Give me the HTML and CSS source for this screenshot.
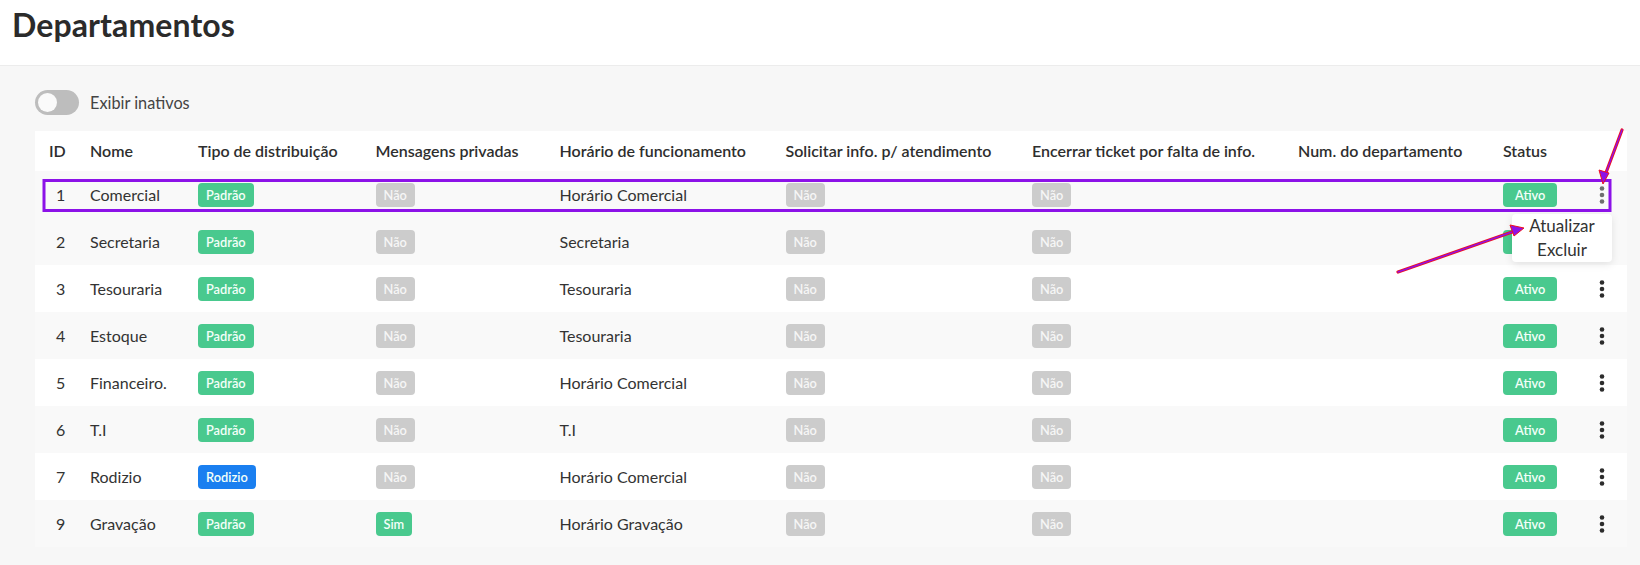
FILE: index.html
```html
<!DOCTYPE html>
<html lang="pt-BR">
<head>
<meta charset="utf-8">
<title>Departamentos</title>
<link rel="stylesheet" href="styles.css">
</head>
<body>
<header class="page-header">
  <h1 class="page-title">Departamentos</h1>
</header>
<main class="content">
  <div class="toggle-row">
    <span class="switch"><span class="knob"></span></span>
    <span class="toggle-label">Exibir inativos</span>
  </div>
  <div class="table-wrap">
    <table class="dept-table">
      <colgroup>
        <col class="c-id"><col class="c-nome"><col class="c-tipo"><col class="c-msg"><col class="c-hor"><col class="c-sol"><col class="c-enc"><col class="c-num"><col class="c-status"><col class="c-act">
      </colgroup>
      <thead>
        <tr>
          <th>ID</th><th>Nome</th><th>Tipo de distribuição</th><th>Mensagens privadas</th><th>Horário de funcionamento</th><th>Solicitar info. p/ atendimento</th><th>Encerrar ticket por falta de info.</th><th>Num. do departamento</th><th>Status</th><th></th>
        </tr>
      </thead>
      <tbody>
        <tr class="hover">
          <td class="id">1</td><td>Comercial</td><td><span class="badge green">Padrão</span></td><td><span class="badge grey">Não</span></td><td>Horário Comercial</td><td><span class="badge grey">Não</span></td><td><span class="badge grey">Não</span></td><td></td><td><span class="badge green wide">Ativo</span></td>
          <td class="act"><svg class="dots dim" width="6" height="20" viewBox="0 0 6 20"><circle cx="3" cy="3.5" r="2.3"/><circle cx="3" cy="10" r="2.3"/><circle cx="3" cy="16.5" r="2.3"/></svg></td>
        </tr>
        <tr>
          <td class="id">2</td><td>Secretaria</td><td><span class="badge green">Padrão</span></td><td><span class="badge grey">Não</span></td><td>Secretaria</td><td><span class="badge grey">Não</span></td><td><span class="badge grey">Não</span></td><td></td><td><span class="badge green wide">Ativo</span></td>
          <td class="act"><svg class="dots" width="6" height="20" viewBox="0 0 6 20"><circle cx="3" cy="3.5" r="2.3"/><circle cx="3" cy="10" r="2.3"/><circle cx="3" cy="16.5" r="2.3"/></svg></td>
        </tr>
        <tr>
          <td class="id">3</td><td>Tesouraria</td><td><span class="badge green">Padrão</span></td><td><span class="badge grey">Não</span></td><td>Tesouraria</td><td><span class="badge grey">Não</span></td><td><span class="badge grey">Não</span></td><td></td><td><span class="badge green wide">Ativo</span></td>
          <td class="act"><svg class="dots" width="6" height="20" viewBox="0 0 6 20"><circle cx="3" cy="3.5" r="2.3"/><circle cx="3" cy="10" r="2.3"/><circle cx="3" cy="16.5" r="2.3"/></svg></td>
        </tr>
        <tr>
          <td class="id">4</td><td>Estoque</td><td><span class="badge green">Padrão</span></td><td><span class="badge grey">Não</span></td><td>Tesouraria</td><td><span class="badge grey">Não</span></td><td><span class="badge grey">Não</span></td><td></td><td><span class="badge green wide">Ativo</span></td>
          <td class="act"><svg class="dots" width="6" height="20" viewBox="0 0 6 20"><circle cx="3" cy="3.5" r="2.3"/><circle cx="3" cy="10" r="2.3"/><circle cx="3" cy="16.5" r="2.3"/></svg></td>
        </tr>
        <tr>
          <td class="id">5</td><td>Financeiro.</td><td><span class="badge green">Padrão</span></td><td><span class="badge grey">Não</span></td><td>Horário Comercial</td><td><span class="badge grey">Não</span></td><td><span class="badge grey">Não</span></td><td></td><td><span class="badge green wide">Ativo</span></td>
          <td class="act"><svg class="dots" width="6" height="20" viewBox="0 0 6 20"><circle cx="3" cy="3.5" r="2.3"/><circle cx="3" cy="10" r="2.3"/><circle cx="3" cy="16.5" r="2.3"/></svg></td>
        </tr>
        <tr>
          <td class="id">6</td><td>T.I</td><td><span class="badge green">Padrão</span></td><td><span class="badge grey">Não</span></td><td>T.I</td><td><span class="badge grey">Não</span></td><td><span class="badge grey">Não</span></td><td></td><td><span class="badge green wide">Ativo</span></td>
          <td class="act"><svg class="dots" width="6" height="20" viewBox="0 0 6 20"><circle cx="3" cy="3.5" r="2.3"/><circle cx="3" cy="10" r="2.3"/><circle cx="3" cy="16.5" r="2.3"/></svg></td>
        </tr>
        <tr>
          <td class="id">7</td><td>Rodizio</td><td><span class="badge blue">Rodizio</span></td><td><span class="badge grey">Não</span></td><td>Horário Comercial</td><td><span class="badge grey">Não</span></td><td><span class="badge grey">Não</span></td><td></td><td><span class="badge green wide">Ativo</span></td>
          <td class="act"><svg class="dots" width="6" height="20" viewBox="0 0 6 20"><circle cx="3" cy="3.5" r="2.3"/><circle cx="3" cy="10" r="2.3"/><circle cx="3" cy="16.5" r="2.3"/></svg></td>
        </tr>
        <tr>
          <td class="id">9</td><td>Gravação</td><td><span class="badge green">Padrão</span></td><td><span class="badge green">Sim</span></td><td>Horário Gravação</td><td><span class="badge grey">Não</span></td><td><span class="badge grey">Não</span></td><td></td><td><span class="badge green wide">Ativo</span></td>
          <td class="act"><svg class="dots" width="6" height="20" viewBox="0 0 6 20"><circle cx="3" cy="3.5" r="2.3"/><circle cx="3" cy="10" r="2.3"/><circle cx="3" cy="16.5" r="2.3"/></svg></td>
        </tr>
      </tbody>
    </table>
  </div>
</main>

<div class="menu">
  <div class="menu-item">Atualizar</div>
  <div class="menu-item">Excluir</div>
</div>

<svg class="annotations" width="1640" height="565" viewBox="0 0 1640 565">
  <rect x="44" y="180.5" width="1566" height="30" fill="none" stroke="#8c12e8" stroke-width="3"/>
  <g stroke-linecap="round">
    <line x1="1622" y1="130" x2="1604" y2="178" stroke="#f0101e" stroke-width="3.2"/>
    <line x1="1622" y1="130" x2="1604" y2="178" stroke="#8c12e8" stroke-width="1.4"/>
    <line x1="1398" y1="272" x2="1515" y2="231" stroke="#f0101e" stroke-width="3.2"/>
    <line x1="1398" y1="272" x2="1515" y2="231" stroke="#8c12e8" stroke-width="1.4"/>
  </g>
  <polygon points="1603,184 1599,170 1609,173" fill="#8c12e8" stroke="#f0101e" stroke-width="1"/>
  <polygon points="1524,228 1510,225 1514,236" fill="#8c12e8" stroke="#f0101e" stroke-width="1"/>
</svg>
</body>
</html>
```

FILE: styles.css
```css
* { box-sizing: border-box; }
html, body { margin: 0; padding: 0; }
body {
  width: 1640px;
  height: 565px;
  overflow: hidden;
  background: #f7f7f7;
  font-family: Lato, "Noto Sans", "Liberation Sans", sans-serif;
  color: #333;
  position: relative;
}
.page-header {
  height: 66px;
  background: #fff;
  border-bottom: 1px solid #ececec;
  padding: 5px 0 0 12px;
}
.page-title {
  margin: 0;
  font-size: 32px;
  font-weight: 700;
  color: #2b2b2b;
  line-height: 40px;
  letter-spacing: 0.1px;
}
.content {
  padding: 24px 13px 0 35px;
}
.toggle-row {
  display: flex;
  align-items: center;
  height: 25px;
  gap: 11px;
}
.switch {
  width: 44px;
  height: 25px;
  border-radius: 13px;
  background: #bdbdbd;
  position: relative;
  display: block;
}
.knob {
  position: absolute;
  left: 3px;
  top: 3px;
  width: 19px;
  height: 19px;
  border-radius: 50%;
  background: #fafafa;
}
.toggle-label {
  font-size: 16.3px;
  color: #444;
}
.table-wrap {
  margin-top: 16px;
}
.dept-table {
  width: 1592px;
  table-layout: fixed;
  border-collapse: collapse;
  font-size: 16px;
}
.c-id { width: 41px; }
.c-nome { width: 108px; }
.c-tipo { width: 177.5px; }
.c-msg { width: 184px; }
.c-hor { width: 226px; }
.c-sol { width: 246.5px; }
.c-enc { width: 266px; }
.c-num { width: 205px; }
.c-status { width: 87px; }
.c-act { width: 51px; }
.dept-table th {
  height: 40px;
  background: #fff;
  text-align: left;
  font-weight: 600;
  font-size: 16px;
  color: #2e2e2e;
  padding: 0 0 2px 14px;
  white-space: nowrap;
}
.dept-table td {
  height: 47px;
  padding: 0 0 0 14px;
  vertical-align: middle;
  white-space: nowrap;
  color: #333;
}
.dept-table tbody tr { background: #fff; }
.dept-table tbody tr:nth-child(even),
.dept-table tbody tr.hover { background: #f9f9f9; }
.dept-table td.id { padding-left: 21px; }
.dept-table td.act { padding: 0; text-align: center; }
.badge {
  display: inline-block;
  height: 24px;
  line-height: 24px;
  padding: 0 8px;
  border-radius: 4px;
  font-size: 12.8px;
  font-weight: 600;
  color: #f4fff9;
  vertical-align: middle;
}
.badge.wide { padding: 0 12px; }
.green { background: #49c98e; }
.grey { background: #cccccc; color: #f6f6f6; }
.blue { background: #1a7ff0; }
.dots { display: inline-block; vertical-align: middle; fill: #2c2c2c; }
.dots.dim { fill: #6e6e6e; }
.menu {
  position: absolute;
  left: 1512px;
  top: 214px;
  width: 100px;
  height: 48px;
  background: #fff;
  border-radius: 4px;
  box-shadow: 0 2px 8px rgba(0,0,0,0.10);
  display: flex;
  flex-direction: column;
  align-items: center;
  padding-top: 0;
}
.menu-item {
  font-size: 17px;
  line-height: 23.5px;
  color: #333;
}
.annotations {
  position: absolute;
  left: 0;
  top: 0;
  pointer-events: none;
}
```
